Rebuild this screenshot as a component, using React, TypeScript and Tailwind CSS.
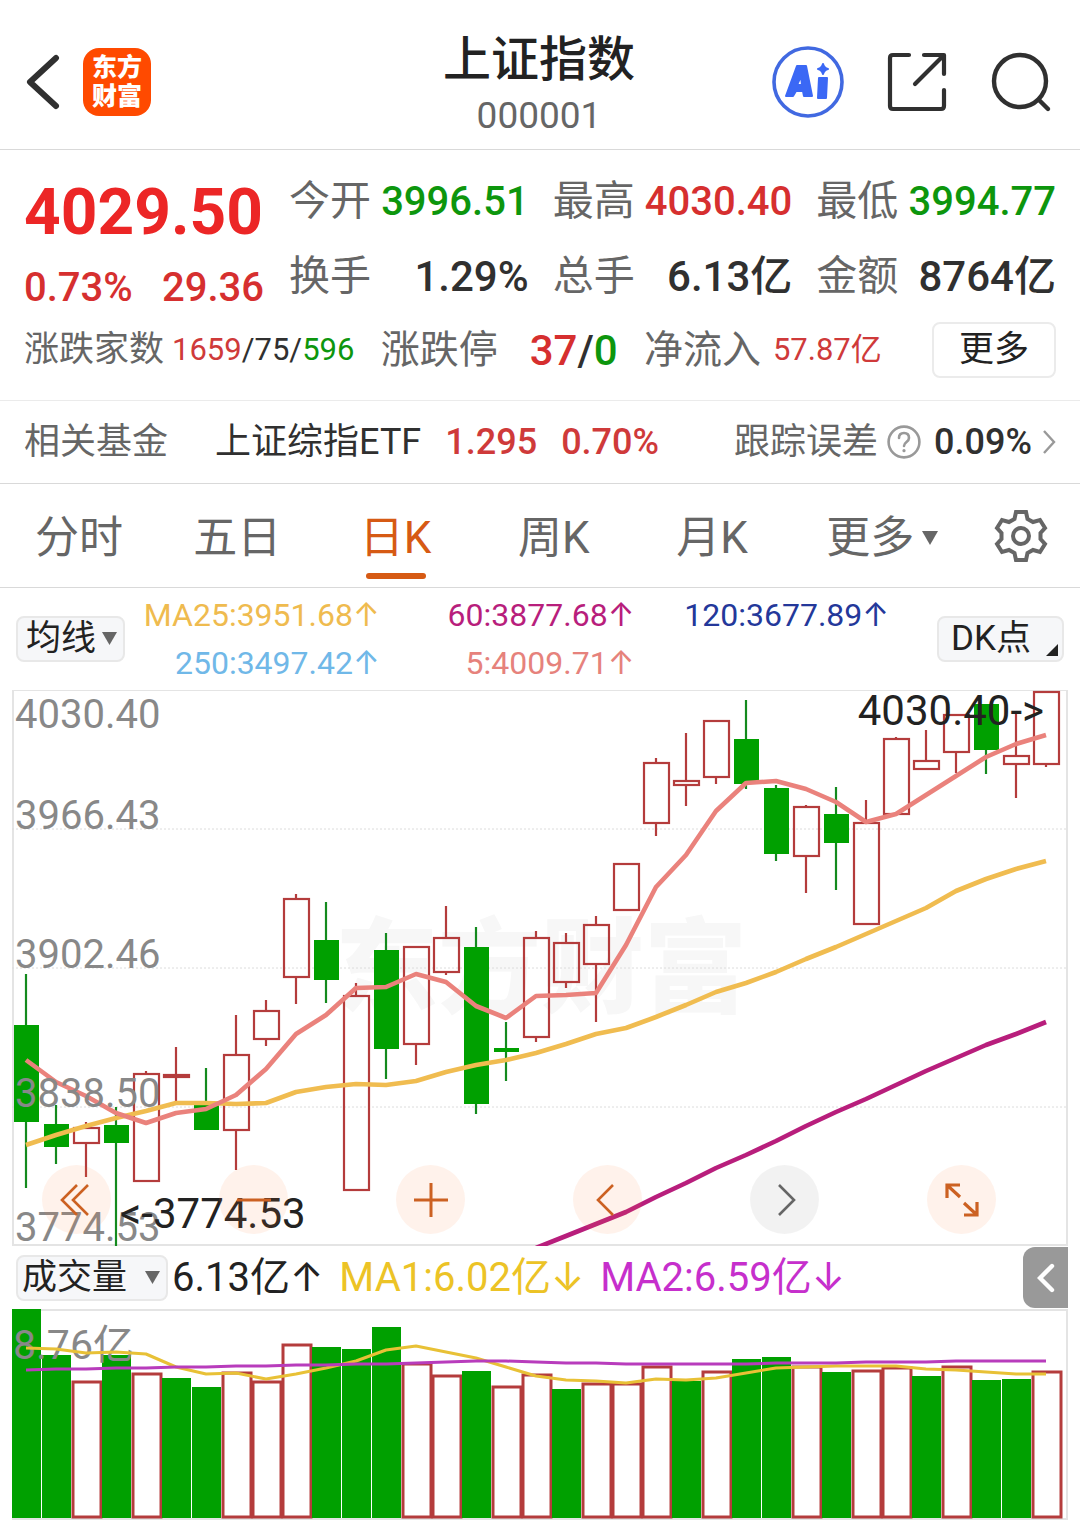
import { useState } from "react";

// [high, bodyTop, bodyBottom, low, isUp]
const CANDLES: [number, number, number, number, boolean][] = [
  [284, 335, 432, 498, false],
  [415, 434, 457, 474, false],
  [432, 438, 453, 487, true],
  [417, 435, 453, 556, false],
  [381, 384, 491, 491, true],
  [357, 385, 387, 411, true],
  [378, 415, 440, 440, false],
  [325, 365, 440, 480, true],
  [310, 321, 349, 356, true],
  [204, 209, 287, 314, true],
  [212, 250, 290, 313, false],
  [293, 306, 500, 500, true],
  [243, 260, 359, 389, false],
  [257, 257, 354, 375, true],
  [216, 248, 282, 285, true],
  [237, 257, 414, 424, false],
  [332, 358, 362, 391, false],
  [241, 248, 347, 352, true],
  [243, 253, 292, 298, true],
  [226, 235, 274, 332, true],
  [174, 174, 220, 220, true],
  [68, 73, 133, 146, true],
  [43, 91, 95, 116, true],
  [31, 31, 87, 94, true],
  [10, 49, 94, 99, false],
  [95, 98, 164, 171, false],
  [115, 117, 166, 203, true],
  [97, 124, 153, 200, false],
  [110, 133, 234, 234, true],
  [47, 49, 124, 124, true],
  [40, 71, 79, 80, true],
  [25, 25, 62, 83, true],
  [14, 14, 60, 84, false],
  [22, 66, 74, 108, true],
  [1, 2, 74, 77, true],
];

const MA5 = [
  370, 392, 406, 423, 433, 423, 419, 405, 379, 344, 325, 298, 297, 284, 292,
  316, 328, 306, 305, 303, 255, 197, 165, 121, 93, 91, 99, 112, 132, 124, 105,
  86, 67, 54, 45,
];

const MA25 = [
  455, 445, 436, 428, 421, 413, 413, 414, 413, 402, 397, 394, 395, 391, 382,
  375, 370, 363, 354, 344, 338, 327, 315, 302, 293, 282, 269, 257, 244, 231,
  218, 201, 189, 179, 171,
];

// starts at the 18th candle
const MA60 = [558, 546, 534, 522, 507, 493, 478, 465, 451, 436, 422, 409, 395, 381, 368, 355, 344, 332];

const VOLUMES: [number, boolean][] = [
  [0, false], [46, false], [73, true], [46, false], [65, true], [69, false],
  [78, false], [64, true], [73, true], [36, true], [38, false], [40, false],
  [18, false], [55, true], [67, true], [62, false], [78, true], [66, true],
  [80, false], [75, true], [75, true], [58, true], [72, false], [63, true],
  [50, false], [48, false], [58, true], [63, false], [62, true], [59, true],
  [67, false], [58, true], [71, false], [70, false], [63, true],
];

const VOL_MA1 = [
  39, 40, 44, 43, 45, 58, 65, 64, 70, 65, 59, 52, 41, 37, 43, 49, 58, 67, 71,
  72, 74, 70, 71, 69, 64, 59, 58, 57, 57, 57, 60, 61, 63, 65, 65,
];

const VOL_MA2 = [
  61, 60, 60, 59, 59, 58, 58, 57, 57, 56, 56, 55, 55, 54, 53, 52, 52, 53, 54,
  54, 55, 55, 55, 55, 55, 54, 54, 54, 53, 53, 53, 52, 52, 52, 52,
];

const GRID_LABELS = [
  { text: "4030.40", y: 38 },
  { text: "3966.43", y: 139 },
  { text: "3902.46", y: 278 },
  { text: "3838.50", y: 417 },
  { text: "3774.53", y: 551 },
];

const STATS = [
  { label: "今开", value: "3996.51", style: "text-[40px] text-[#0d960d]" },
  { label: "最高", value: "4030.40", style: "text-[40px] text-[#d62f2f]" },
  { label: "最低", value: "3994.77", style: "text-[40px] text-[#0d960d]" },
  { label: "换手", value: "1.29%", style: "text-[42px] text-[#303030]" },
  { label: "总手", value: "6.13亿", style: "text-[42px] text-[#303030]" },
  { label: "金额", value: "8764亿", style: "text-[42px] text-[#303030]" },
];

const AVERAGES = [
  { text: "MA25:3951.68↑", color: "text-[#efbb4f]" },
  { text: "60:3877.68↑", color: "text-[#b81e7c]" },
  { text: "120:3677.89↑", color: "text-[#24389a]" },
  { text: "250:3497.42↑", color: "text-[#70b8e8]" },
  { text: "5:4009.71↑", color: "text-[#e6827c]" },
];

const TABS = ["分时", "五日", "日K", "周K", "月K"];

const toPoints = (values: number[], start = 0) =>
  values.map((y, i) => `${14 + (i + start) * 30},${y}`).join(" ");

const Header = () => (
  <header className="flex items-center justify-between h-[150px] pl-[26px] pr-7 pt-[14px] border-b border-[#d9d9d9]">
    <div className="flex flex-1 items-center gap-[22px]">
      <button aria-label="返回">
        <svg width="35" height="56" viewBox="0 0 35 56" fill="none" stroke="#303030" strokeWidth="6" strokeLinecap="round" strokeLinejoin="round">
          <path d="M30 4 4 28 30 52" />
        </svg>
      </button>
      <a
        href="#home"
        className="flex flex-col items-center justify-center size-[68px] rounded-2xl bg-[#ff4a00] text-white text-[25px] leading-[29px] font-black"
      >
        <span>东方</span>
        <span>财富</span>
      </a>
    </div>
    <div className="pt-2 text-center">
      <h1 className="text-[48px] leading-[60px] font-medium text-[#222]">上证指数</h1>
      <p className="text-[37px] leading-[52px] text-[#666]">000001</p>
    </div>
    <div className="flex flex-1 items-center justify-end gap-[43px]">
      <button aria-label="Ai">
        <svg width="72" height="72" viewBox="0 0 72 72">
          <circle cx="36" cy="36" r="34" fill="none" stroke="#4169e1" strokeWidth="3.6" />
          <g fill="#3b68f5" stroke="#3b68f5" strokeWidth="2" strokeLinejoin="round">
            <path fillRule="evenodd" d="M25 20h9l6 30h-8l-1-5h-7l-3 5h-7zM29 30l-4 9h5z" />
            <path d="M47 32h8l-1 20h-8z" />
            <path d="M51 18q1 4 5 5-4 1-5 5-1-4-5-5 4-1 5-5z" />
          </g>
        </svg>
      </button>
      <button aria-label="分享">
        <svg width="60" height="60" viewBox="0 0 60 60" fill="none" stroke="#303030" strokeWidth="4.2" strokeLinecap="round" strokeLinejoin="round">
          <path d="M22 3H6q-3 0-3 3v48q0 3 3 3h48q3 0 3-3V38M37 3h20v19M56 4 28 32" />
        </svg>
      </button>
      <button aria-label="搜索">
        <svg width="62" height="62" viewBox="0 0 62 62" fill="none" stroke="#303030" strokeWidth="4.4" strokeLinecap="round">
          <circle cx="30" cy="30" r="26" />
          <path d="m49 49 9 9" />
        </svg>
      </button>
    </div>
  </header>
);

const Quote = () => (
  <section className="px-6 pt-[14px] pb-3 border-b border-[#ebebeb]">
    <div className="flex gap-[25px]">
      <div className="w-[240px] shrink-0 pt-3 whitespace-nowrap">
        <p className="text-[64px] leading-[74px] font-bold text-[#ec2626]">4029.50</p>
        <p className="flex justify-between pt-3 text-[40px] leading-[52px] font-medium text-[#d62f2f]">
          <span>0.73%</span>
          <span>29.36</span>
        </p>
      </div>
      <dl className="grid grid-cols-3 flex-1 gap-x-6">
        {STATS.map((item) => (
          <div key={item.label} className="flex items-center justify-between h-[75px] leading-[75px] whitespace-nowrap">
            <dt className="text-[41px] text-[#666]">{item.label}</dt>
            <dd className={`font-medium ${item.style}`}>{item.value}</dd>
          </div>
        ))}
      </dl>
    </div>
    <div className="flex items-center justify-between h-[72px] mb-[2px] whitespace-nowrap">
      <p className="flex items-center gap-2">
        <span className="text-[35px] text-[#666]">涨跌家数</span>
        <span className="text-[31px] text-[#303030]">
          <span className="text-[#cf3a3a]">1659</span>/75/<span className="text-[#0d960d]">596</span>
        </span>
      </p>
      <p className="flex items-center gap-8">
        <span className="text-[39px] text-[#666]">涨跌停</span>
        <span className="text-[42px] font-medium text-[#303030]">
          <span className="text-[#d62f2f]">37</span>/<span className="text-[#0d960d]">0</span>
        </span>
      </p>
      <p className="flex items-center gap-3">
        <span className="text-[39px] text-[#666]">净流入</span>
        <span className="text-[31px] text-[#cf3a3a]">57.87亿</span>
      </p>
      <button className="ml-6 w-[124px] h-[56px] rounded-lg border-2 border-[#ebebeb] text-[35px] leading-[52px] text-[#222]">
        更多
      </button>
    </div>
  </section>
);

const FundRow = () => (
  <a
    href="#fund"
    className="flex items-center justify-between h-[83px] px-6 border-b border-[#d9d9d9] text-[36px] text-[#303030] whitespace-nowrap"
  >
    <span className="text-[#666]">相关基金</span>
    <span className="flex items-center gap-6 pr-7">
      <span>上证综指ETF</span>
      <span className="font-medium text-[#cf3a3a]">1.295</span>
      <span className="font-medium text-[#cf3a3a]">0.70%</span>
    </span>
    <span className="flex items-center gap-2">
      <span className="text-[#666]">跟踪误差</span>
      <svg width="36" height="36" viewBox="0 0 36 36" fill="none" stroke="#999" strokeWidth="2.6" strokeLinecap="round">
        <circle cx="18" cy="18" r="15.4" />
        <path d="M13 14q0-5 5-5t5 5q0 2-2.500 4T18 22" />
        <path d="M18 26.500v.2" strokeWidth="3.200" />
      </svg>
      <span className="pl-1 pr-[2px] font-medium">0.09%</span>
      <svg width="14" height="26" viewBox="0 0 14 26" fill="none" stroke="#999" strokeWidth="2.4">
        <path d="m2 2 10 11L2 24" />
      </svg>
    </span>
  </a>
);

const Tabs = () => {
  const [active, setActive] = useState("日K");

  return (
    <nav className="flex h-[104px] border-b border-[#d9d9d9] text-[44px] text-[#666] whitespace-nowrap">
      {TABS.map((tab) => (
        <button
          key={tab}
          onClick={() => setActive(tab)}
          className={`relative flex-4 pt-1 ${tab === active ? "text-[#d65a14]" : ""}`}
        >
          {tab}
          {tab === active && (
            <span className="absolute bottom-2 left-1/2 -translate-x-1/2 w-[60px] h-[6px] rounded-full bg-[#d65a14]" />
          )}
        </button>
      ))}
      <button className="flex flex-4 items-center justify-center gap-2 pt-1 pl-3">
        更多
        <svg width="16" height="14" viewBox="0 0 16 14" fill="#666">
          <path d="M0 0h16L8 14z" />
        </svg>
      </button>
      <button aria-label="设置" className="flex flex-3 items-center justify-center">
        <svg width="54" height="54" viewBox="0 0 54 54" fill="none" stroke="#666" strokeWidth="4">
          <path d="M22 3h10l1.500 7 5.500 3 7-2 5 8-4.500 5v6l4.500 5-5 8-7-2-5.500 3-1.500 7H22l-1.500-7-5.500-3-7 2-5-8 4.500-5v-6L3 19l5-8 7 2 5.500-3z" />
          <circle cx="27" cy="27" r="8" />
        </svg>
      </button>
    </nav>
  );
};

const Averages = () => (
  <div className="flex items-center h-[102px] px-4 whitespace-nowrap">
    <label className="relative">
      <select
        aria-label="均线"
        className="block appearance-none w-[109px] h-[46px] pl-2 rounded-lg border-2 border-[#e8e8e8] bg-[#f6f7f9] text-[35px] leading-[42px] text-[#222]"
      >
        <option>均线</option>
      </select>
      <svg className="absolute right-2 top-4 pointer-events-none" width="15" height="13" viewBox="0 0 15 13" fill="#666">
        <path d="M0 0h15L7.500 13z" />
      </svg>
    </label>
    <ul className="grid grid-cols-3 flex-1 text-right text-[32px] leading-[48px]">
      {AVERAGES.map((item) => (
        <li key={item.text} className={item.color}>{item.text}</li>
      ))}
    </ul>
    <button className="relative ml-12 w-[127px] h-[46px] pl-3 rounded-lg border-2 border-[#e8e8e8] bg-[#f6f7f9] text-left text-[35px] leading-[42px] text-[#222]">
      DK点
      <svg className="absolute right-1 bottom-1" width="12" height="12" viewBox="0 0 12 12" fill="#222">
        <path d="M12 0v12H0z" />
      </svg>
    </button>
  </div>
);

const ROUND = "flex items-center justify-center size-[69px] rounded-full";

const ChartButtons = () => (
  <div className="absolute left-[30px] right-[72px] bottom-3 flex justify-between">
    <button aria-label="最早" className={`${ROUND} bg-[#fc7b3d]/10`}>
      <svg width="34" height="34" viewBox="0 0 34 34" fill="none" stroke="#cc6122" strokeWidth="2.600">
        <path d="M17 2 2 17l15 15M28 2 13 17l15 15" />
      </svg>
    </button>
    <button aria-label="缩小" className={`${ROUND} bg-[#fc7b3d]/10`}>
      <svg width="34" height="34" viewBox="0 0 34 34" stroke="#cc6122" strokeWidth="3">
        <path d="M0 17h34" />
      </svg>
    </button>
    <button aria-label="放大" className={`${ROUND} bg-[#fc7b3d]/10`}>
      <svg width="34" height="34" viewBox="0 0 34 34" stroke="#cc6122" strokeWidth="3">
        <path d="M0 17h34M17 0v34" />
      </svg>
    </button>
    <button aria-label="向左" className={`${ROUND} bg-[#fc7b3d]/10`}>
      <svg width="34" height="34" viewBox="0 0 34 34" fill="none" stroke="#cc6122" strokeWidth="2.600">
        <path d="M22 2 7 17l15 15" />
      </svg>
    </button>
    <button aria-label="向右" className={`${ROUND} bg-black/5`}>
      <svg width="34" height="34" viewBox="0 0 34 34" fill="none" stroke="#666" strokeWidth="2.600">
        <path d="m11 2 15 15-15 15" />
      </svg>
    </button>
    <button aria-label="全屏" className={`${ROUND} bg-[#fc7b3d]/10`}>
      <svg width="34" height="34" viewBox="0 0 34 34" fill="none" stroke="#cc6122" strokeWidth="3.200">
        <path d="M2 15V2h13M2 2l13 12M19 32h13V19M32 32 19 20" />
      </svg>
    </button>
  </div>
);

const KLine = () => (
  <div className="relative mx-3">
    <svg className="block w-full h-auto" viewBox="0 0 1056 556">
      <text x="529" y="315" textAnchor="middle" fontSize="103" fontWeight="900" fill="#f7f7f7">东方财富</text>
      <rect x="1" y="0" width="1054" height="555" fill="none" stroke="#e4e4e4" strokeWidth="2" />
      {[139, 278, 417].map((y) => (
        <line key={y} x1="0" x2="1056" y1={y} y2={y} stroke="#dcdcdc" strokeDasharray="2 2" />
      ))}
      {CANDLES.map(([high, top, bottom, low, up], i) => {
        const x = 14 + i * 30;
        return up ? (
          <g key={i} stroke="#b43c3c" strokeWidth="2.200" fill="none">
            <path d={`M${x} ${high}V${top}M${x} ${bottom}V${low}`} />
            <rect x={x - 12} y={top} width="25" height={bottom - top} />
          </g>
        ) : (
          <g key={i} fill="#00a000">
            <path d={`M${x} ${high}V${low}`} stroke="#148a1e" strokeWidth="2.200" />
            <rect x={x - 12} y={top} width="25" height={bottom - top} />
          </g>
        );
      })}
      <g fill="none" strokeWidth="4.600" strokeLinejoin="round">
        <polyline points={toPoints(MA60, 17)} stroke="#b81e7c" />
        <polyline points={toPoints(MA25)} stroke="#f0bc50" />
        <polyline points={toPoints(MA5)} stroke="#ea827c" />
      </g>
      <g fontSize="40" fill="#888">
        {GRID_LABELS.map((label) => (
          <text key={label.text} x="3" y={label.y}>{label.text}</text>
        ))}
      </g>
      <g fontSize="42" fill="#222">
        <text x="108" y="538">&lt;-3774.53</text>
        <text x="1032" y="35" textAnchor="end">4030.40-&gt;</text>
      </g>
    </svg>
    <ChartButtons />
  </div>
);

const VolumeHeader = () => (
  <div className="flex items-center h-[63px] pl-4 pr-3 text-[40px] whitespace-nowrap">
    <label className="relative mr-1">
      <select
        aria-label="成交量"
        className="block appearance-none w-[152px] h-[46px] pl-1 rounded-lg border-2 border-[#e8e8e8] bg-[#f6f7f9] text-[35px] leading-[42px] text-[#222]"
      >
        <option>成交量</option>
      </select>
      <svg className="absolute right-2 top-4 pointer-events-none" width="15" height="13" viewBox="0 0 15 13" fill="#666">
        <path d="M0 0h15L7.500 13z" />
      </svg>
    </label>
    <p className="flex gap-4">
      <span className="text-[#222]">6.13亿↑</span>
      <span className="text-[#ecc326]">MA1:6.02亿↓</span>
      <span className="text-[#c62fcc]">MA2:6.59亿↓</span>
    </p>
    <button aria-label="展开" className="flex items-center justify-center ml-auto w-[45px] h-[61px] rounded-l-xl bg-[#999]">
      <svg width="18" height="30" viewBox="0 0 18 30" fill="none" stroke="#fff" strokeWidth="4.400" strokeLinecap="round">
        <path d="M15 3 3 15l12 12" />
      </svg>
    </button>
  </div>
);

const Volume = () => (
  <svg className="block mx-3 w-[calc(100%-24px)] h-auto" viewBox="0 0 1056 211">
    <rect x="1" y="1" width="1054" height="209" fill="none" stroke="#e4e4e4" strokeWidth="2" />
    {VOLUMES.map(([top, up], i) =>
      up ? (
        <rect key={i} x={i * 30 + 1} y={top} width="28" height={208 - top} fill="none" stroke="#b43c3c" strokeWidth="3" />
      ) : (
        <rect key={i} x={i * 30} y={top} width="29" height={209 - top} fill="#00a000" />
      )
    )}
    <text x="1" y="50" fontSize="41" fill="#888">8.76亿</text>
    <g fill="none" strokeWidth="3" strokeLinejoin="round">
      <polyline points={toPoints(VOL_MA1)} stroke="#e8c136" />
      <polyline points={toPoints(VOL_MA2)} stroke="#b83cbc" />
    </g>
  </svg>
);

const App = () => {
  return (
    <main className="min-h-screen overflow-hidden bg-white font-['Roboto','Inter','Noto_Sans_CJK_SC',sans-serif]">
      <Header />
      <Quote />
      <FundRow />
      <Tabs />
      <Averages />
      <KLine />
      <VolumeHeader />
      <Volume />
    </main>
  );
};

export default App;
